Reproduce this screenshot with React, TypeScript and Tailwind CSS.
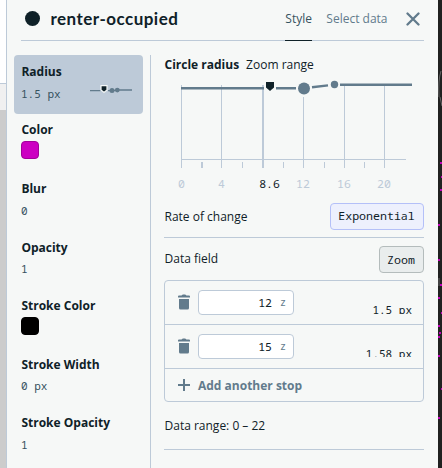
import React from "react";

const mono = "font-['Noto_Sans_Mono','DejaVu_Sans_Mono',monospace]";

const TrashIcon = () => (
  <svg width="12" height="16" viewBox="0 0 12 16" className="shrink-0 fill-[#627b8c]">
    <path d="M0 2.6Q0 1.6 1 1.6H3.5L4.8 0.6H7.2L8.5 1.6H11Q12 1.6 12 2.6V3.6H0ZM1 5H11V14Q11 15.5 9.5 15.5H2.5Q1 15.5 1 14Z" />
  </svg>
);

const MiniCurve = () => (
  <svg width="42" height="12" className="shrink-0">
    <path d="M0 5.6H10.5M18 5.6H20M29 5H42" stroke="#627b8c" strokeWidth="1.3" />
    <path d="M11 0.6H17V5L14 7.5L11 5Z" fill="#0f2128" stroke="#f5f8f8" strokeWidth="1.2" />
    <path d="M22 5.6L28 5.2" stroke="#627b8c" strokeWidth="1.3" />
    <circle cx="22" cy="5.6" r="2.5" fill="#627b8c" />
    <circle cx="27.3" cy="5.1" r="2.4" fill="#627b8c" />
  </svg>
);

type Item = { label: string; value?: string; swatch?: string; active?: boolean };
const items: Item[] = [
  { label: "Radius", value: "1.5 px", active: true },
  { label: "Color", swatch: "bg-[#cc00c2] border-[#a3009b]" },
  { label: "Blur", value: "0" },
  { label: "Opacity", value: "1" },
  { label: "Stroke Color", swatch: "bg-black border-black" },
  { label: "Stroke Width", value: "0 px" },
  { label: "Stroke Opacity", value: "1" },
];

const SidebarItem = ({ label, value, swatch, active }: Item) => (
  <div className={`h-[58.55px] w-[129px] rounded-[4px] pl-[7px] pt-[7.93px] ${active ? "bg-[#bdcad8]" : ""}`}>
    <div className="h-[18px] whitespace-nowrap pl-[0.4px] text-[12px] font-bold leading-[18px]">{label}</div>
    {swatch ? (
      <div className={`mt-[2px] h-[18px] w-[18px] rounded-[4px] border ${swatch}`} />
    ) : (
      <div className="flex items-start justify-between pr-[11.5px] pt-[3.8px]">
        <span className={`${mono} text-[11px] leading-[17.6px] text-[#36525f]`}>{value}</span>
        {active && <MiniCurve />}
      </div>
    )}
  </div>
);

const grid = [17.5, 57.5, 139.5, 180.5, 220.5];
const ticks = [38, 78.5, 119.5, 160.5, 200.5];
const axis = [
  { x: 17.5, t: "0" },
  { x: 57.5, t: "4" },
  { x: 105.5, t: "8.6", on: true },
  { x: 139, t: "12" },
  { x: 180, t: "16" },
  { x: 220, t: "20" },
];

const Chart = () => (
  <svg width="260" height="118" className="block">
    <g stroke="#bdcad8">
      {grid.map((x) => (
        <path key={x} d={`M${x} ${x === 139.5 ? 20 : 8}V91`} />
      ))}
      <path d="M99 8V91" strokeWidth="2" />
      <path d="M17 82.5H242" />
      {ticks.map((x) => (
        <path key={x} d={`M${x} 85V91`} strokeWidth={x === 38 ? 2 : 1} />
      ))}
    </g>
    <g stroke="#627b8c" strokeWidth="2.4">
      <path d="M17 11.3H100M112 11.3H132M148 10.2L164 8.4M176 7.7H248" />
    </g>
    <path d="M102 5H110V10.5L106 14L102 10.5Z" fill="#0f2128" />
    <circle cx="140" cy="11.5" r="6" fill="#627b8c" />
    <circle cx="170.5" cy="7.5" r="3.7" fill="#627b8c" />
    {axis.map((a) => (
      <text key={a.t} x={a.x} y="111" textAnchor="middle" fill={a.on ? "#0f2128" : "#bdcad8"} className={`${mono} text-[11.5px]`}>
        {a.t}
      </text>
    ))}
  </svg>
);

const Stop = ({ zoom, px, clip }: { zoom: string; px: string; clip: string }) => (
  <div className="flex h-[44px] border-b border-[#bdcad8] pl-[13px] pr-[11px] pt-[9px]">
    <div className="mt-[4px] h-4"><TrashIcon /></div>
    <div className={`ml-2 flex h-[25px] w-[96px] items-center justify-end rounded-[4px] border border-[#bdcad8] bg-white pr-[7px] ${mono} text-[11.5px]`}>
      {zoom}<span className="ml-[8px] text-[10px] text-[#627b8c]">z</span>
    </div>
    <div className={`ml-auto mt-[11px] overflow-hidden whitespace-pre ${mono} text-[11px] leading-[18px] ${clip}`}>{px}</div>
  </div>
);

const mapDots = [[2, 163], [3, 177], [2, 190], [0, 225], [0, 260], [2, 285], [0, 298], [3, 313], [0, 326], [1, 333], [0, 337], [0, 356], [3, 389], [0, 418]];

export default function App() {
  return (
    <div className="flex h-[468px] w-[442px] overflow-hidden bg-[#f6f8f7] font-['Open_Sans',sans-serif] text-[12px] text-[#0f2128]">
      <div className="flex w-[6px] shrink-0 flex-col bg-[#cccccc]">
        <div className="h-[84px] border-b border-[#bdcad8] bg-white" />
        <div className="h-[26px] bg-[#f0f0f0]" />
      </div>
      <main className="flex w-[432px] shrink-0 flex-col border-l border-[#bdcad8]">
        <header className="ml-[14px] flex h-[41px] w-[403px] items-start border-b border-[#bdcad8]">
          <div className="ml-[3.5px] mt-[11px] h-[15px] w-[15px] rounded-full bg-[#0f2128]" />
          <h1 className="ml-[11px] mt-[7px] w-[130px] whitespace-nowrap font-['Lato',sans-serif] text-[17px] font-bold leading-[24px] tracking-[0.47px]">renter-occupied</h1>
          <nav className="ml-auto flex">
            <div className="h-[41px] w-[27px] border-b border-[#0f2128] pt-[10px] leading-[18px] text-[#36525f]">Style</div>
            <div className="ml-[14px] mt-[10px] whitespace-nowrap leading-[18px] text-[#627b8c]">Select data</div>
          </nav>
          <svg width="14" height="14" className="ml-[18px] mr-[4.5px] mt-[12px]"><path d="M1.5 1.5L12.5 12.5M12.5 1.5L1.5 12.5" stroke="#627b8c" strokeWidth="2.3" strokeLinecap="round" /></svg>
        </header>
        <div className="mt-[14px] flex h-[413px]">
          <aside className="ml-[7px] w-[137px] shrink-0 border-r border-[#bdcad8]">
            {items.map((i) => <SidebarItem key={i.label} {...i} />)}
          </aside>
          <section className="ml-[13px] w-[260px]">
            <div className="flex h-[22px] gap-[7px] pl-[0.5px] leading-[19px]"><b>Circle radius</b><span>Zoom range</span></div>
            <Chart />
            <div className="flex h-[43px] items-center justify-between border-b border-[#bdcad8]">
              <span className="pl-[0.5px] pt-[2px]">Rate of change</span>
              <div className={`flex h-[27px] w-[94px] items-center justify-center rounded-[4px] border border-[#b4c0f8] bg-[#edf0fd] pr-px ${mono} text-[11.6px]`}>Exponential</div>
            </div>
            <div className="flex h-[42px] items-center justify-between">
              <span className="pl-[0.5px]">Data field</span>
              <div className={`flex h-[27px] w-[45px] items-center justify-center rounded-[4px] border border-[#b4bcbc] bg-[#e9eded] pr-px pt-px ${mono} text-[11.6px]`}>Zoom</div>
            </div>
            <div className="h-[122px] rounded-[4px] border border-[#bdcad8]">
              <Stop zoom="12" px="1.5 px" clip="h-[13px]" />
              <Stop zoom="15" px="1.58 px" clip="h-[12px]" />
              <div className="flex h-[32px] items-center pl-[13px] font-bold text-[#627b8c]">
                <svg width="12" height="12" className="mr-2"><path d="M0 6H12M6 0V12" stroke="#627b8c" strokeWidth="2" /></svg>
                <span className="pt-px">Add another stop</span>
              </div>
            </div>
            <div className="flex h-[48px] items-center border-b border-[#bdcad8] pl-[0.5px]">Data range: 0 – 22</div>
          </section>
        </div>
      </main>
      <svg width="4" height="468" className="shrink-0 bg-[#202120]">
        <path d="M3 71Q0 80 1 97M2 97L4 106M1 278V286" stroke="#666" fill="none" />
        {mapDots.map(([x, y]) => <rect key={y} x={x} y={y - 1} width="2" height="2" fill="#c000ba" />)}
      </svg>
    </div>
  );
}
